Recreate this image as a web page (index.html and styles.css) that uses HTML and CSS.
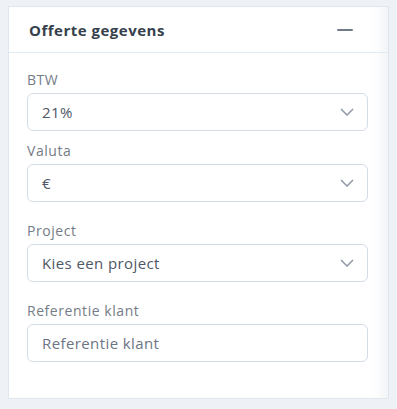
FILE: index.html
```html
<!doctype html>
<html lang="nl">
	<head>
		<title>Offerte gegevens</title>
		<link rel="stylesheet" href="styles.css">
	</head>
	<body>
		<div class="card">
			<div class="card-header">
				<span class="card-title">Offerte gegevens</span>
				<span class="collapse"></span>
			</div>

			<div class="card-body">
				<div class="field">
					<label>BTW</label>
					<div class="select">
						<span>21%</span>
						<svg width="14" height="8" viewBox="0 0 14 8"><polyline points="1,1 7,7 13,1" /></svg>
					</div>
				</div>

				<div class="field field-tight">
					<label>Valuta</label>
					<div class="select">
						<span>€</span>
						<svg width="14" height="8" viewBox="0 0 14 8"><polyline points="1,1 7,7 13,1" /></svg>
					</div>
				</div>

				<div class="field">
					<label>Project</label>
					<div class="select">
						<span>Kies een project</span>
						<svg width="14" height="8" viewBox="0 0 14 8"><polyline points="1,1 7,7 13,1" /></svg>
					</div>
				</div>

				<div class="field">
					<label>Referentie klant</label>
					<input class="input" type="text" placeholder="Referentie klant">
				</div>
			</div>
		</div>
	</body>
</html>
```

FILE: styles.css
```css
/* Page setup */

body {
	margin: 6px 8px;
	background-color: #eef2f6;
	font-family: "Open Sans", sans-serif;
	font-size: 14px;
}

.card {
	width: 379px;
	background: white;
	border: 1px solid #dfe6ee;
	box-shadow: inset -18px 0 14px -14px rgba(200, 210, 222, 0.35);
}

/* Header */

.card-header {
	height: 45px;
	display: flex;
	align-items: center;
	justify-content: space-between;
	padding: 0 35px 0 20px;
	border-bottom: 1px solid #e1e9f2;
}

.card-title {
	font-size: 15px;
	font-weight: bold;
	color: #363f4c;
	letter-spacing: 0.5px;
}

.collapse {
	width: 16px;
	height: 2px;
	background: #6f7a89;
	border-radius: 1px;
}

/* Form fields */

.card-body {
	padding: 18px 20px 36px 18px;
	display: flex;
	flex-direction: column;
}

.field { margin-top: 20px; }

.field:first-child { margin-top: 0; }

.field-tight { margin-top: 11px; }

label {
	display: block;
	line-height: 18px;
	margin-bottom: 4px;
	color: #757c87;
	letter-spacing: 0.55px;
}

.select, .input {
	box-sizing: border-box;
	width: 100%;
	height: 38px;
	border: 1px solid #d4dce7;
	border-radius: 6px;
	padding: 0 13px 0 14px;
	color: #4e5765;
	font-family: inherit;
	font-size: 15px;
	letter-spacing: 0.4px;
	background: white;
}

.select {
	display: flex;
	align-items: center;
	justify-content: space-between;
}

.select svg polyline {
	fill: none;
	stroke: #8e98a6;
	stroke-width: 1.5;
}

.input { outline: none; }

.input::placeholder { color: #6c7583; }
```
